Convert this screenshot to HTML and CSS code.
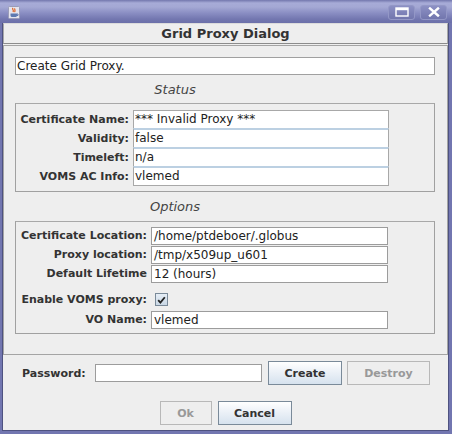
FILE: index.html
```html
<!DOCTYPE html>
<html>
<head>
<meta charset="utf-8">
<link rel="stylesheet" href="styles.css">
</head>
<body>
<div class="window">
  <div class="titlebar">
    <span class="app-icon">
      <svg width="12" height="13" viewBox="0 0 12 13">
        <rect x="0.5" y="0.5" width="11" height="12" rx="1" fill="#e4e4ee" stroke="#9a9cb8"/>
        <path d="M5 2 C3.5 3.5 6.5 4 5 6 M7 2.5 C6 3.5 8 4.5 6.5 6" stroke="#e0601c" stroke-width="1.2" fill="none"/>
        <path d="M2.5 7.5 H9 V9.5 C9 10.5 8 11 7 11 H4.5 C3.5 11 2.5 10.5 2.5 9.5 Z" fill="#5d79b0"/>
        <path d="M9 8 H10 V9.5 H9" stroke="#5d79b0" fill="none"/>
      </svg>
    </span>
    <div class="tb-buttons">
      <span class="tb-btn">
        <svg width="14" height="10" viewBox="0 0 14 10"><rect x="1" y="1" width="12" height="8" fill="none" stroke="#fff" stroke-width="1.4"/><rect x="1" y="1" width="12" height="2.2" fill="#fff"/></svg>
      </span>
      <span class="tb-btn">
        <svg width="12" height="10" viewBox="0 0 12 10"><path d="M2 1.5 L10 8.5 M10 1.5 L2 8.5" stroke="#fff" stroke-width="2.4" stroke-linecap="square"/></svg>
      </span>
    </div>
  </div>
  <div class="client">
    <div class="header">Grid Proxy Dialog</div>
    <div class="main">
      <div class="msg">Create Grid Proxy.</div>
      <div class="section-title">Status</div>
      <div class="group status">
        <div class="srow"><span class="lbl">Certificate Name:</span><span class="sval first">*** Invalid Proxy ***</span></div>
        <div class="srow"><span class="lbl">Validity:</span><span class="sval">false</span></div>
        <div class="srow"><span class="lbl">Timeleft:</span><span class="sval">n/a</span></div>
        <div class="srow"><span class="lbl">VOMS AC Info:</span><span class="sval last">vlemed</span></div>
      </div>
      <div class="section-title opt">Options</div>
      <div class="group options">
        <div class="orow"><span class="lbl">Certificate Location:</span><span class="oval">/home/ptdeboer/.globus</span></div>
        <div class="orow"><span class="lbl">Proxy location:</span><span class="oval">/tmp/x509up_u601</span></div>
        <div class="orow"><span class="lbl">Default Lifetime</span><span class="oval">12 (hours)</span></div>
        <div class="orow check-row"><span class="lbl">Enable VOMS proxy:</span>
          <span class="checkbox"><svg width="9" height="8" viewBox="0 0 9 8"><path d="M1.2 4.2 L3.4 6.6 L7.8 1.2" stroke="#222" stroke-width="1.8" fill="none"/></svg></span>
        </div>
        <div class="orow vo-row"><span class="lbl">VO Name:</span><span class="oval">vlemed</span></div>
      </div>
    </div>
    <div class="pwrow">
      <span class="pw-lbl">Password:</span>
      <span class="pw-field"></span>
      <span class="btn create">Create</span>
      <span class="btn disabled destroy">Destroy</span>
    </div>
    <div class="okrow">
      <span class="btn disabled ok">Ok</span>
      <span class="btn cancel">Cancel</span>
    </div>
  </div>
</div>
</body>
</html>
```

FILE: styles.css
```css
* { box-sizing: border-box; }
html, body { margin: 0; padding: 0; }
body {
  width: 452px;
  height: 434px;
  overflow: hidden;
  font-family: "DejaVu Sans", "Liberation Sans", sans-serif;
  background: #7478b0;
}
.window {
  width: 452px;
  height: 434px;
  display: flex;
  flex-direction: column;
  padding: 0 3px 3px 2px;
  background: #7276b0;
}
.titlebar {
  height: 23px;
  flex: none;
  margin: 0 -3px 0 -2px;
  display: flex;
  align-items: center;
  justify-content: space-between;
  padding: 0 5px 0 8px;
  background: linear-gradient(to bottom, #7377ad 0px, #a7abd7 3px, #a4a8d4 7px, #8a8ec3 13px, #7377b0 19px, #6c70aa 23px);
}
.app-icon { display: flex; width: 12px; height: 13px; margin-top: 1px; }
.tb-buttons { display: flex; gap: 5px; margin-top: 1px; }
.tb-btn {
  width: 27px;
  height: 15px;
  border: 1px solid #9397c6;
  border-radius: 3px;
  background: linear-gradient(to bottom, #8c90c4, #7276ad);
  display: flex;
  align-items: center;
  justify-content: center;
}
.client {
  flex: 1;
  display: flex;
  flex-direction: column;
  background: #eeeeee;
  border: 1px solid #4e5280;
  border-top: none;
}
.header {
  height: 21px;
  border: 1px solid #a8a8a8;
  border-top-color: #dcdcdc;
  border-bottom-color: #8c8c8c;
  text-align: center;
  font-weight: bold;
  font-size: 13px;
  line-height: 19px;
  color: #333;
}
.main {
  margin-top: 1px;
  border: 1px solid #a4a4a4;
  padding: 11px 12px 19px 11px;
  height: 310px;
}
.msg {
  height: 18px;
  background: #fff;
  border: 1px solid #a0a0a0;
  font-size: 12px;
  line-height: 16px;
  padding-left: 1px;
  color: #222;
}
.section-title {
  width: 320px;
  height: 28px;
  text-align: center;
  font-style: italic;
  font-size: 13px;
  line-height: 30px;
  color: #444;
}
.section-title.opt { height: 29px; line-height: 30px; }
.group {
  border: 1px solid #a0a0a0;
  border-top-color: #a8a8a8;
}
.status { height: 89px; padding: 6px 0 5px 0; }
.lbl {
  flex: none;
  text-align: right;
  font-weight: bold;
  font-size: 11px;
  color: #333;
  padding-right: 4px;
  white-space: nowrap;
}
.srow { display: flex; align-items: flex-end; }
.srow .lbl { width: 117px; height: 17px; line-height: 17px; }
.sval {
  width: 256px;
  height: 19px;
  background: #fff;
  border-left: 1px solid #a8a8a8;
  border-right: 1px solid #a8a8a8;
  border-top: 2px solid #bcd0e2;
  font-size: 12px;
  line-height: 17px;
  padding-left: 1px;
  color: #222;
  white-space: nowrap;
}
.sval.first { height: 18px; border-top: 1px solid #a8a8a8; }
.sval.last { height: 20px; border-bottom: 1px solid #a8a8a8; }
.srow:last-child { align-items: flex-start; }
.srow:last-child .lbl { margin-top: 2px; }
.options { height: 113px; padding: 5px 0 4px 0; display: flex; flex-direction: column; gap: 1px; }
.orow { display: flex; align-items: center; height: 18px; }
.orow .lbl { width: 135px; line-height: 18px; }
.oval {
  width: 237px;
  height: 18px;
  background: #fff;
  border: 1px solid #9c9c9c;
  font-size: 12px;
  line-height: 16px;
  padding-left: 2px;
  color: #222;
  white-space: nowrap;
}
.check-row { height: 13px; margin-top: 9px; margin-bottom: 4px; }
.check-row .lbl { line-height: 13px; }
.checkbox {
  width: 13px;
  height: 13px;
  margin-left: 4px;
  border: 1px solid #7a8a99;
  background: linear-gradient(to bottom, #e6eef6, #c9d7e5);
  display: flex;
  align-items: center;
  justify-content: center;
}
.pwrow {
  display: flex;
  align-items: center;
  margin-top: 6px;
  padding-left: 19px;
  height: 24px;
}
.pw-lbl {
  width: 73px;
  font-weight: bold;
  font-size: 11px;
  color: #333;
}
.pw-field {
  width: 167px;
  height: 18px;
  background: #fff;
  border: 1px solid #9c9c9c;
  margin-right: 6px;
}
.btn {
  height: 24px;
  display: flex;
  align-items: center;
  justify-content: center;
  font-weight: bold;
  font-size: 11px;
  color: #333;
  border: 1px solid #7a8a99;
  background: linear-gradient(to bottom, #ffffff 0%, #f0f4f9 35%, #d6e2ee 100%);
}
.btn.disabled {
  border-color: #b8b8b8;
  background: #eeeeee;
  color: #999;
}
.create { width: 74px; margin-right: 5px; }
.destroy { width: 83px; }
.okrow {
  display: flex;
  justify-content: center;
  gap: 6px;
  margin-top: 16px;
}
.ok { width: 52px; }
.cancel { width: 74px; }
```
